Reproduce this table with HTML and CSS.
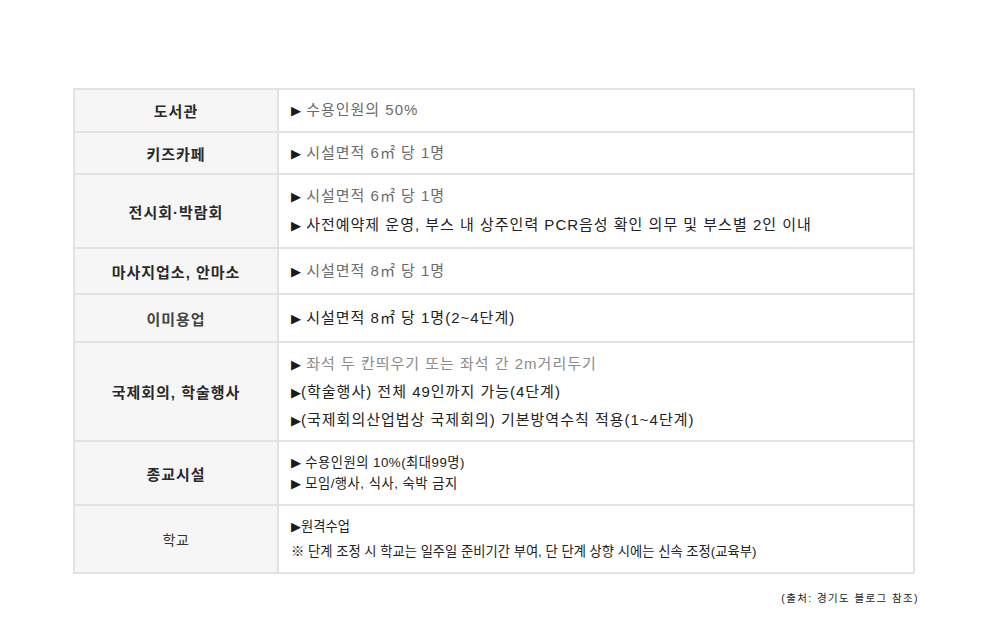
FILE: index.html
```html
<!DOCTYPE html>
<html lang="ko">
<head>
<meta charset="utf-8">
<title>단계별 방역수칙</title>
<link rel="stylesheet" href="styles.css">
</head>
<body>
<div class="page">
  <table class="rules">
    <tr class="h43">
      <th>도서관</th>
      <td><span class="ar">▶</span> <span class="gray">수용인원의 50%</span></td>
    </tr>
    <tr class="h42">
      <th>키즈카페</th>
      <td><span class="ar">▶</span> <span class="gray">시설면적 6㎡ 당 1명</span></td>
    </tr>
    <tr class="h74">
      <th>전시회·박람회</th>
      <td class="lh28">
        <div><span class="ar">▶</span> <span class="gray">시설면적 6㎡ 당 1명</span></div>
        <div><span class="ar">▶</span> 사전예약제 운영, 부스 내 상주인력 PCR음성 확인 의무 및 부스별 2인 이내</div>
      </td>
    </tr>
    <tr class="h46">
      <th>마사지업소, 안마소</th>
      <td><span class="ar">▶</span> <span class="gray">시설면적 8㎡ 당 1명</span></td>
    </tr>
    <tr class="h48">
      <th class="semi">이미용업</th>
      <td><span class="ar">▶</span> 시설면적 8㎡ 당 1명(2~4단계)</td>
    </tr>
    <tr class="h99">
      <th>국제회의, 학술행사</th>
      <td class="lh27">
        <div><span class="ar">▶</span> <span class="light">좌석 두 칸띄우기 또는 좌석 간 2m거리두기</span></div>
        <div><span class="ar">▶</span>(학술행사) 전체 49인까지 가능(4단계)</div>
        <div><span class="ar">▶</span>(국제회의산업법상 국제회의) 기본방역수칙 적용(1~4단계)</div>
      </td>
    </tr>
    <tr class="h64">
      <th>종교시설</th>
      <td class="small lh21 wide">
        <div><span class="ar">▶</span> 수용인원의 10%(최대99명)</div>
        <div><span class="ar">▶</span> 모임/행사, 식사, 숙박 금지</div>
      </td>
    </tr>
    <tr class="h68">
      <th class="plain">학교</th>
      <td class="small lh25">
        <div><span class="ar">▶</span>원격수업</div>
        <div>※ 단계 조정 시 학교는 일주일 준비기간 부여, 단 단계 상향 시에는 신속 조정(교육부)</div>
      </td>
    </tr>
  </table>
  <p class="source">(출처: 경기도 블로그 참조)</p>
</div>
</body>
</html>
```

FILE: styles.css
```css
html, body {
  margin: 0;
  padding: 0;
  background: #ffffff;
}

.page {
  padding: 88px 0 0 73px;
  width: 846px;
  font-family: "Liberation Sans", "Noto Sans CJK KR", sans-serif;
  color: #222222;
}

.rules {
  width: 842px;
  border-collapse: collapse;
  table-layout: fixed;
}

.rules th,
.rules td {
  border: 2px solid #e2e2e2;
  padding: 0;
  vertical-align: middle;
}

.rules th {
  width: 202px;
  background: #f6f6f6;
  font-size: 15px;
  font-weight: 700;
  letter-spacing: 1px;
  color: #2a2a2a;
  text-align: center;
}

.rules th.semi {
  font-weight: 600;
  color: #444444;
}

.rules th.plain {
  font-weight: 400;
  font-size: 14px;
  letter-spacing: 0.5px;
  color: #333333;
}

.rules td {
  padding-left: 12px;
  font-size: 15px;
  line-height: 20px;
  letter-spacing: 1px;
  text-align: left;
  color: #222222;
}

.rules td.small {
  font-size: 13.3px;
  letter-spacing: 0;
}

.rules td.wide {
  letter-spacing: 0.5px;
}

.lh28 { line-height: 28px !important; }
.lh27 { line-height: 27px !important; }
.lh21 { line-height: 21px !important; }
.lh25 { line-height: 25px !important; }

.h43 { height: 43px; }
.h42 { height: 42px; }
.h74 { height: 74px; }
.h46 { height: 46px; }
.h48 { height: 48px; }
.h99 { height: 99px; }
.h64 { height: 64px; }
.h68 { height: 68px; }

.ar {
  font-family: "DejaVu Sans", sans-serif;
  font-size: 13px;
  letter-spacing: 0;
  color: #1a1a1a;
}

.gray {
  color: #6b6b6b;
}

.light {
  color: #8a8a8a;
}

.source {
  margin: 16px 0 0 0;
  text-align: right;
  font-size: 10.5px;
  letter-spacing: 1.4px;
  color: #222222;
}
```
